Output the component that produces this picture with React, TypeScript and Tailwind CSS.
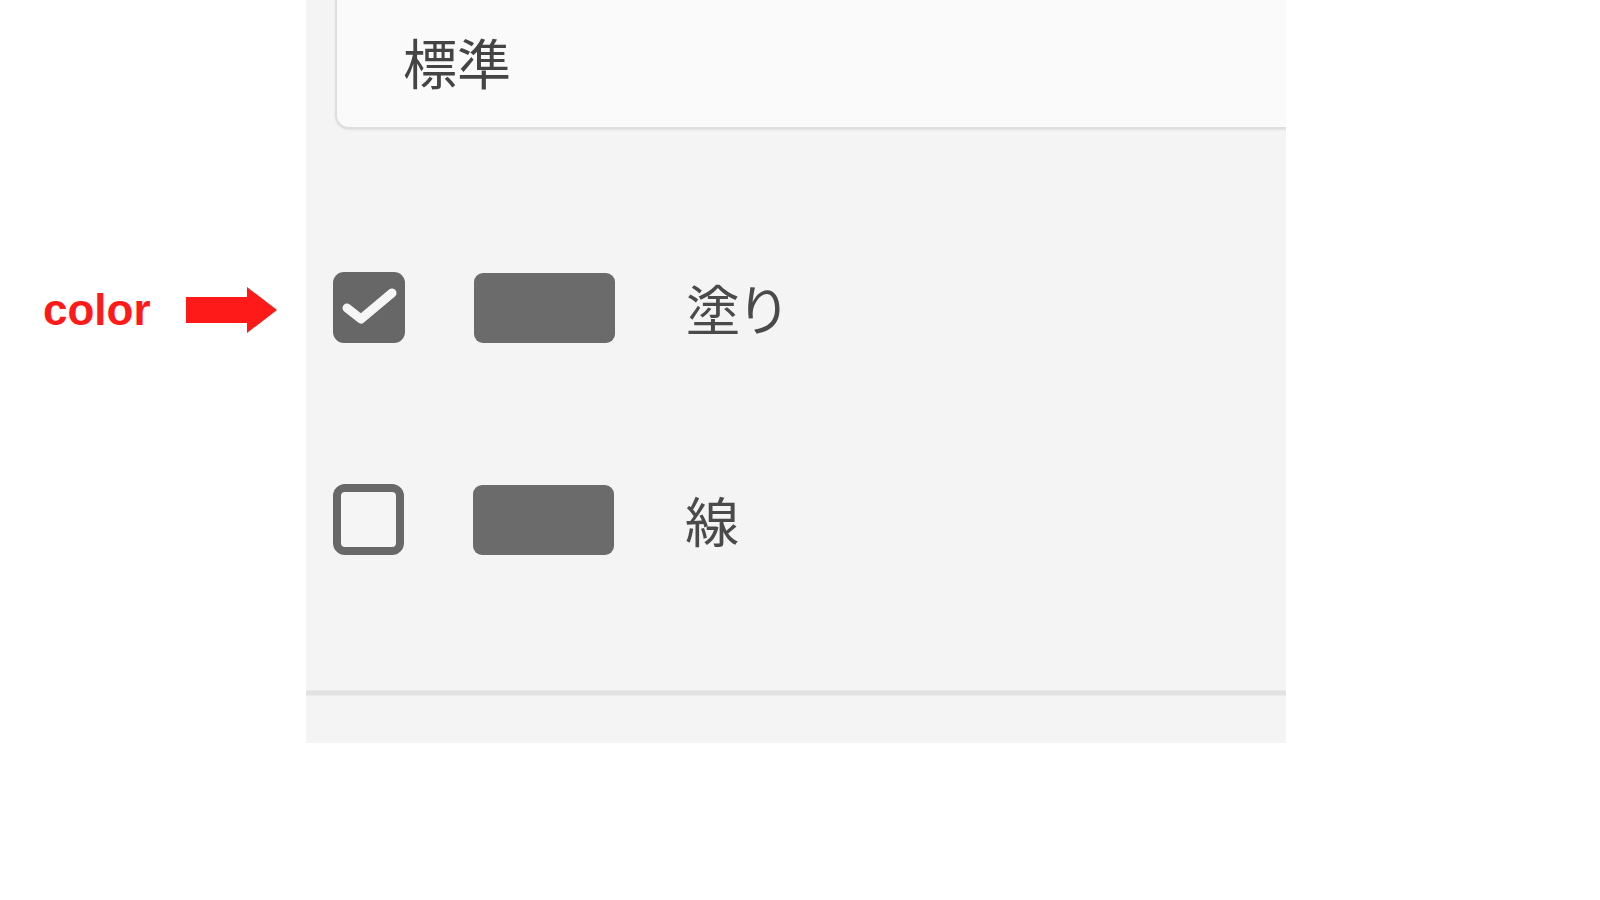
const jp = { fontFamily: '"Noto Sans CJK JP", "Noto Sans", sans-serif' };

function Checkbox({ checked }: { checked: boolean }) {
  if (checked) {
    return (
      <div className="w-[72px] h-[71px] rounded-[11px] bg-[#676767] flex items-center justify-center shrink-0">
        <svg width="72" height="71" viewBox="0 0 72 71">
          <path d="M14 36 L28 47 L59 21" fill="none" stroke="#f6f6f6" strokeWidth="9" strokeLinecap="round" strokeLinejoin="round" />
        </svg>
      </div>
    );
  }
  return <div className="w-[71px] h-[71px] rounded-[12px] border-[8px] border-[#686868] bg-[#f5f5f5] shrink-0" />;
}

function ColorRow({ checked, label }: { checked: boolean; label: string }) {
  return (
    <div className="flex items-center h-[71px] pl-[27px]">
      <Checkbox checked={checked} />
      <div className="ml-[69px] w-[141px] h-[70px] rounded-[9px] bg-[#6b6b6b] shrink-0" />
      <span className="ml-[71px] text-[54px] leading-none text-[#4a4a4a] [font-feature-settings:'palt']" style={jp}>
        {label}
      </span>
    </div>
  );
}

export default function App() {
  return (
    <div className="w-[1600px] h-[900px] bg-white flex overflow-hidden">
      {/* annotation column */}
      <div className="w-[306px] shrink-0 pt-[285px] pl-[43px] flex items-center gap-[35px] self-start">
        <span
          className="text-[44px] font-bold leading-none text-[#ff1a1a]"
          style={{ fontFamily: '"Liberation Sans", Arial, sans-serif' }}
        >
          color
        </span>
        <svg width="92" height="48" viewBox="0 0 92 48" className="mt-[2px]">
          <polygon points="0,10 61,10 61,0 91,23 61,46 61,36 0,36" fill="#ff1a1a" />
        </svg>
      </div>

      {/* panel */}
      <div className="w-[980px] h-[743px] bg-[#f4f4f4] overflow-hidden flex flex-col shrink-0">
        <div className="ml-[29px] -mt-[20px] w-[1000px] h-[149px] rounded-[14px] border-2 border-[#dedede] bg-[#fafafa] shadow-[0_1px_2px_rgba(0,0,0,0.08)] flex items-center pl-[66px] pt-[14px] shrink-0">
          <span className="text-[54px] leading-none text-[#444444]" style={jp}>
            標準
          </span>
        </div>

        <div className="mt-[143px] flex flex-col gap-[141px]">
          <ColorRow checked label="塗り" />
          <ColorRow checked={false} label="線" />
        </div>

        <div className="mt-[135px] h-[6px] bg-[#e1e1e1] border-y border-[#ebebeb] shrink-0" />
      </div>
    </div>
  );
}
